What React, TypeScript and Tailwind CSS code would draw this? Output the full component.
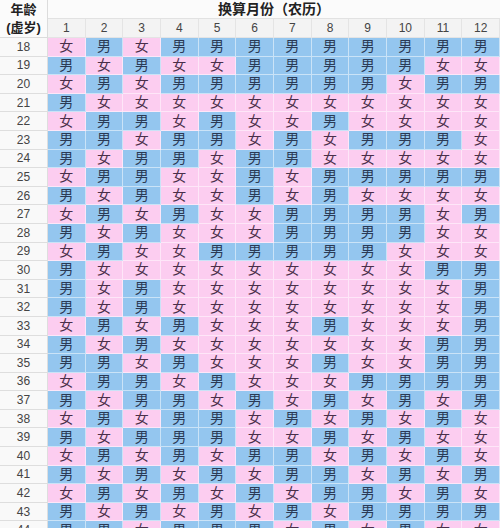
import React from "react";

const rows: [number, string][] = [
  [18, "FMFMMMMMMMMM"],
  [19, "MFMFFMMMMMFF"],
  [20, "FMFMMMMMMFMM"],
  [21, "MFFFFFFFFFFF"],
  [22, "FMMFMFFMFFFF"],
  [23, "MMFMMFMFMMMF"],
  [24, "MFMMFMMFFFFF"],
  [25, "FMMFFMFMMMMM"],
  [26, "MFMFFMFMFFFF"],
  [27, "FMFMFFMMMMFM"],
  [28, "MFMFFFMMMMFF"],
  [29, "FMFFMMMMMFFF"],
  [30, "MFFFFFFFFFMM"],
  [31, "MFMFFFFFFFFM"],
  [32, "MFMFFFFFFFFM"],
  [33, "FMFMFFFMFFFM"],
  [34, "MFMFFFFFFFMM"],
  [35, "MMFMFFFMFFMM"],
  [36, "FMMFMFFFMMMM"],
  [37, "MFMMFMFMFMFM"],
  [38, "FMFMMFMFMFMF"],
  [39, "MFMMMFFMFMFF"],
  [40, "FMFMFMMFMFMF"],
  [41, "MFMFMFMMFMFM"],
  [42, "FMFMFMFMMFMF"],
  [43, "MFMFMFMFMMMM"],
  [44, "MMFMMMFMFMFF"],
];

const font = { fontFamily: '"Liberation Sans", "Noto Sans CJK SC", sans-serif' };

export default function App() {
  return (
    <div className="w-[500px] h-[528px] overflow-hidden bg-white" style={font}>
      <div className="grid grid-cols-[48px_repeat(12,minmax(0,1fr))]">
        <div className="row-span-2 h-[38px] flex flex-col items-center justify-center bg-[#fbfbfb] border-r border-b border-[#dcdcdc] text-[13px] font-bold text-[#222] leading-[18px]">
          <span>年龄</span>
          <span>(虚岁)</span>
        </div>
        <div className="col-span-12 h-[19px] flex items-center justify-center bg-[#fbfbfb] border-b border-[#e2e2e2] text-[14px] font-bold text-[#222]">
          换算月份（农历）
        </div>
        {Array.from({ length: 12 }, (_, i) => (
          <div
            key={i}
            className="h-[19px] flex items-center justify-center bg-[#f3f3f3] border-r border-b border-[#e4e4e4] text-[12px] text-[#444]"
          >
            {i + 1}
          </div>
        ))}
        {rows.map(([age, s]) => (
          <React.Fragment key={age}>
            <div className="h-[18.6px] flex items-center justify-center bg-[#f9f9f9] border-r border-b border-[#dedede] text-[12px] text-[#444]">
              {age}
            </div>
            {s.split("").map((c, j) =>
              c === "M" ? (
                <div
                  key={j}
                  className="h-[18.6px] flex items-center justify-center bg-[#94c6ef] border-r border-b border-white/50 text-[14px] text-[#2b3a55]"
                >
                  男
                </div>
              ) : (
                <div
                  key={j}
                  className="h-[18.6px] flex items-center justify-center bg-[#fccdf0] border-r border-b border-white/50 text-[14px] text-[#4a2f4a]"
                >
                  女
                </div>
              )
            )}
          </React.Fragment>
        ))}
      </div>
    </div>
  );
}
